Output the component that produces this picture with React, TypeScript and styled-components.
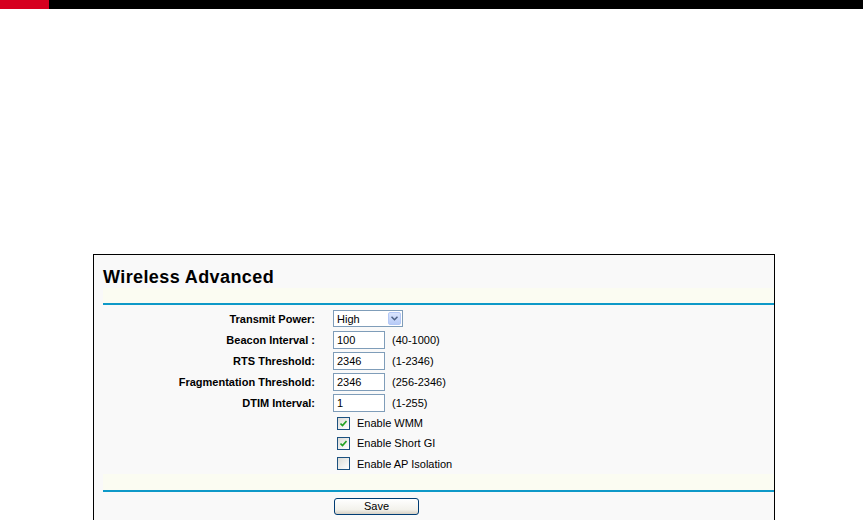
import React from "react";
import styled, { createGlobalStyle } from "styled-components";

const GlobalStyle = createGlobalStyle`
  html, body {
    margin: 0;
    padding: 0;
    background: #ffffff;
  }
  body {
    font-family: "Liberation Sans", Arial, sans-serif;
    color: #000;
  }
`;

const TopBar = styled.div`
  display: flex;
  height: 9px;
  background: #000;
`;

const RedBlock = styled.div`
  width: 49px;
  background: #d6001f;
`;

const Page = styled.div`
  padding: 245px 0 0 93px;
`;

const Panel = styled.div`
  width: 671px;
  border: 1px solid #000;
  background: #f9f9f9;
  padding-left: 9px;
  box-sizing: content-box;
  display: flex;
  flex-direction: column;
`;

const Title = styled.h1`
  margin: 0;
  height: 33px;
  box-sizing: border-box;
  padding-top: 13px;
  font-size: 18px;
  line-height: 18px;
  font-weight: bold;
  letter-spacing: 0.4px;
`;

const Strip = styled.div<{ $h: number }>`
  height: ${(p) => p.$h}px;
  background: #fbfcf2;
  border-bottom: 2px solid #0e99c8;
`;

const Form = styled.div`
  padding-top: 3px;
  display: flex;
  flex-direction: column;
`;

const Row = styled.div<{ $h: number }>`
  height: ${(p) => p.$h}px;
  display: grid;
  grid-template-columns: 212px 1fr;
  column-gap: 18px;
  align-items: center;
`;

const Label = styled.div`
  text-align: right;
  font-size: 11px;
  font-weight: bold;
  white-space: nowrap;
`;

const Field = styled.div`
  display: flex;
  align-items: center;
  font-size: 11px;
`;

const TextBox = styled.div`
  width: 52px;
  height: 18px;
  box-sizing: border-box;
  border: 1px solid #7f9db9;
  background: #fff;
  padding-left: 3px;
  font-size: 11px;
  line-height: 16px;
`;

const Hint = styled.span`
  margin-left: 7px;
  font-size: 11px;
`;

const Select = styled.div`
  width: 70px;
  height: 17px;
  box-sizing: border-box;
  border: 1px solid #7f9db9;
  background: #fff;
  display: flex;
  align-items: center;
  justify-content: space-between;
  padding: 1px 1px 1px 3px;
  font-size: 11px;
`;

const ArrowButton = styled.span`
  width: 13px;
  height: 13px;
  box-sizing: border-box;
  border: 1px solid #b4c8f6;
  border-radius: 2px;
  background: linear-gradient(#d9e4fd, #b8cbf7);
  display: flex;
  align-items: center;
  justify-content: center;
`;

const CheckField = styled.div`
  display: flex;
  align-items: center;
  padding-left: 4px;
  font-size: 11px;
`;

const Box = styled.span`
  width: 13px;
  height: 13px;
  box-sizing: border-box;
  border: 1px solid #1c5180;
  background: linear-gradient(135deg, #dcdcd7, #ffffff);
  display: flex;
  align-items: center;
  justify-content: center;
  margin-right: 7px;
`;

const ButtonRow = styled.div`
  display: grid;
  grid-template-columns: 212px 1fr;
  column-gap: 19px;
  padding: 4px 0 6px;
`;

const SaveButton = styled.button`
  width: 85px;
  height: 17px;
  padding: 0;
  border: 1px solid #003c74;
  border-radius: 3px;
  background: linear-gradient(#ffffff, #f3f2ec 70%, #d6d0c5);
  font-family: "Liberation Sans", Arial, sans-serif;
  font-size: 11px;
  line-height: 15px;
  color: #000;
`;

const Chevron = () => (
  <svg width="7" height="5" viewBox="0 0 7 5">
    <path d="M0.5 0.8 L3.5 3.8 L6.5 0.8" fill="none" stroke="#4d6185" strokeWidth="1.5" />
  </svg>
);

const Tick = () => (
  <svg width="7" height="7" viewBox="0 0 7 7">
    <path d="M0.5 3.5 L2.5 5.5 L6.5 1" fill="none" stroke="#21a121" strokeWidth="1.6" />
  </svg>
);

const fields = [
  { label: "Beacon Interval :", value: "100", hint: "(40-1000)" },
  { label: "RTS Threshold:", value: "2346", hint: "(1-2346)" },
  { label: "Fragmentation Threshold:", value: "2346", hint: "(256-2346)" },
  { label: "DTIM Interval:", value: "1", hint: "(1-255)" },
];

const checks = [
  { label: "Enable WMM", checked: true, h: 20 },
  { label: "Enable Short GI", checked: true, h: 20 },
  { label: "Enable AP Isolation", checked: false, h: 21 },
];

export default function App() {
  return (
    <>
      <GlobalStyle />
      <TopBar>
        <RedBlock />
      </TopBar>
      <Page>
        <Panel>
          <Title>Wireless Advanced</Title>
          <Strip $h={15} />
          <Form>
            <Row $h={21}>
              <Label>Transmit Power:</Label>
              <Field>
                <Select>
                  <span>High</span>
                  <ArrowButton>
                    <Chevron />
                  </ArrowButton>
                </Select>
              </Field>
            </Row>
            {fields.map((f) => (
              <Row $h={21} key={f.label}>
                <Label>{f.label}</Label>
                <Field>
                  <TextBox>{f.value}</TextBox>
                  <Hint>{f.hint}</Hint>
                </Field>
              </Row>
            ))}
            {checks.map((c) => (
              <Row $h={c.h} key={c.label}>
                <span />
                <CheckField>
                  <Box>{c.checked && <Tick />}</Box>
                  {c.label}
                </CheckField>
              </Row>
            ))}
          </Form>
          <Strip $h={16} />
          <ButtonRow>
            <span />
            <div>
              <SaveButton>Save</SaveButton>
            </div>
          </ButtonRow>
        </Panel>
      </Page>
    </>
  );
}
